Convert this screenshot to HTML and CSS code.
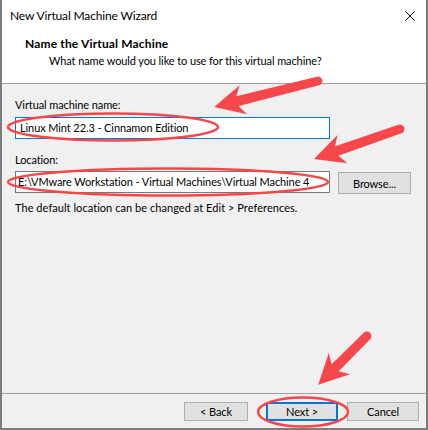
FILE: index.html
```html
<!DOCTYPE html>
<html lang="en">
<head>
  <meta charset="UTF-8" />
  <title>New Virtual Machine Wizard</title>
  <link rel="stylesheet" href="styles.css">
</head>
<body>
  <div class="window">
    <div class="titlebar">
      <span class="title">New Virtual Machine Wizard</span>
      <svg class="close" width="10" height="10" viewBox="0 0 10 10">
        <path d="M0.5 0.5 L9.5 9.5 M9.5 0.5 L0.5 9.5" stroke="#111" stroke-width="1" fill="none"/>
      </svg>
    </div>

    <div class="header">
      <div class="header-title">Name the Virtual Machine</div>
      <div class="header-sub">What name would you like to use for this virtual machine?</div>
    </div>

    <div class="content">
      <label class="field-label">Virtual machine name:</label>
      <div class="textbox focused">Linux Mint 22.3 - Cinnamon Edition</div>

      <label class="field-label loc-label">Location:</label>
      <div class="loc-row">
        <div class="textbox">E:\VMware Workstation - Virtual Machines\Virtual Machine 4</div>
        <button class="btn browse">Browse...</button>
      </div>
      <p class="hint">The default location can be changed at Edit &gt; Preferences.</p>
    </div>

    <div class="footer">
      <button class="btn back">&lt; Back</button>
      <button class="btn next">Next &gt;</button>
      <button class="btn cancel">Cancel</button>
    </div>
  </div>

  <!-- red markup drawn over the screenshot -->
  <svg class="markup" width="428" height="430" viewBox="0 0 428 430">
    <g fill="#f6474a">
      <path transform="translate(318 81) rotate(165.96)" d="M0,-4.5 L83,-5 L77,-15 L107,0 L77,15 L83,5 L0,4.5 A4.5,4.5 0 0 1 0,-4.5 Z"/>
      <path transform="translate(400 129) rotate(160.8)" d="M0,-4.5 L67,-5 L61,-15 L91,0 L61,15 L67,5 L0,4.5 A4.5,4.5 0 0 1 0,-4.5 Z"/>
      <path transform="translate(367 336) rotate(135)" d="M0,-4.5 L45,-5 L39,-15 L69,0 L39,15 L45,5 L0,4.5 A4.5,4.5 0 0 1 0,-4.5 Z"/>
    </g>
    <g fill="none" stroke="#f6474a" stroke-width="2.5">
      <ellipse cx="113" cy="127" rx="105" ry="13.5"/>
      <ellipse cx="168" cy="182" rx="160" ry="13.5"/>
      <ellipse cx="303" cy="412" rx="45" ry="14.5"/>
    </g>
  </svg>
</body>
</html>
```

FILE: styles.css
```css
:root {
  --face: #f0f0f0;
  --edge: #a0a0a0;
  --accent: #0078d7;
  --btn: #e1e1e1;
  --btn-edge: #adadad;
}

* {
  margin: 0;
  padding: 0;
  box-sizing: border-box;
}

body {
  width: 428px;
  height: 430px;
  position: relative;
  overflow: hidden;
  font-family: Lato, "Liberation Sans", sans-serif;
  font-size: 11px;
  letter-spacing: -0.1px;
  line-height: 16px;
  color: #000;
  background: #fff;
}

.window {
  width: 428px;
  height: 430px;
  display: flex;
  flex-direction: column;
  border: 2px solid #7c7c7c;
  border-top: none;
  background: var(--face);
}

/* Title bar */
.titlebar {
  height: 31px;
  background: #fff;
  display: flex;
  align-items: center;
  justify-content: space-between;
  padding: 0 11px 0 8px;
  font-size: 12px;
  letter-spacing: -0.15px;
}

.close {
  display: block;
}

/* Wizard header */
.header {
  height: 53px;
  background: #fff;
  padding-top: 5px;
  border-bottom: 1px solid var(--edge);
}

.header-title {
  font-size: 12px;
  font-weight: 700;
  letter-spacing: 0.15px;
  margin-left: 23px;
}

.header-sub {
  margin-left: 47px;
  margin-top: 1px;
}

/* Form area */
.content {
  flex: 1;
  padding: 13px 0 0 13px;
  display: flex;
  flex-direction: column;
  align-items: flex-start;
}

.field-label {
  display: block;
}

.textbox {
  width: 315px;
  height: 22px;
  margin-top: 4px;
  padding: 2px 0 0 4px;
  background: #fff;
  border: 1px solid #7a7a7a;
  white-space: nowrap;
  overflow: hidden;
}

.textbox.focused {
  border-color: var(--accent);
}

.loc-label {
  margin-top: 13px;
}

.loc-row {
  display: flex;
  gap: 8px;
}

.loc-row .textbox {
  margin-top: 3px;
  padding-left: 2px;
}

.btn {
  font-family: inherit;
  font-size: 11px;
  letter-spacing: inherit;
  color: #000;
  background: var(--btn);
  border: 1px solid var(--btn-edge);
  height: 19px;
  width: 72px;
}

.browse {
  width: 73px;
  height: 22px;
  margin-top: 4px;
}

.hint {
  margin-top: 6px;
  letter-spacing: 0.05px;
}

/* Button row */
.footer {
  height: 35px;
  border-top: 1px solid var(--edge);
  display: flex;
  justify-content: flex-end;
  align-items: flex-start;
  padding: 8px 7px 0 0;
}

.back {
  width: 64px;
  margin-right: 18px;
}

.next {
  border: 2px solid var(--accent);
  margin-right: 9px;
}

.markup {
  position: absolute;
  top: 0;
  left: 0;
  pointer-events: none;
}
```
